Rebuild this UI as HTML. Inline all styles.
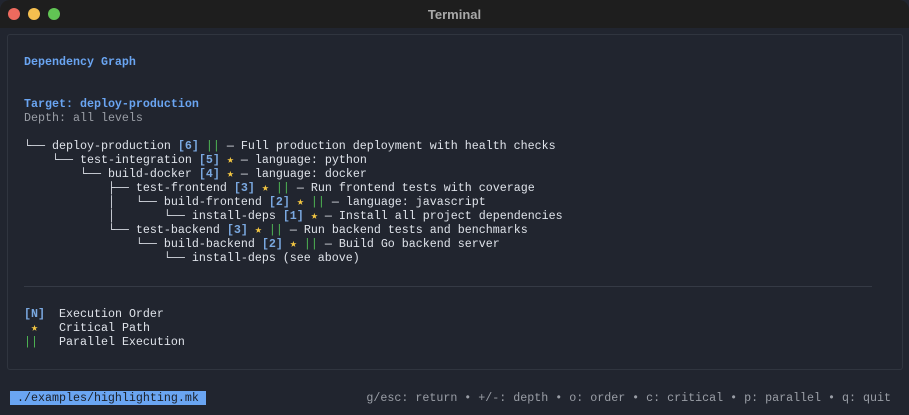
<!DOCTYPE html>
<html><head><meta charset="utf-8"><style>
*{margin:0;padding:0;box-sizing:border-box}
body{width:909px;height:415px;background:#21252f;overflow:hidden;font-family:"Liberation Mono","DejaVu Sans Mono",monospace;font-size:11.67px;color:#dfe3ea;position:relative}
.tb{position:absolute;left:0;top:0;width:909px;height:28px;background:#1e1e1e;border-radius:10px 10px 0 0}
.tb .t{position:absolute;width:100%;top:7px;text-align:center;font-family:"Liberation Sans",sans-serif;font-size:13px;font-weight:bold;color:#a9a9a9}
.d{position:absolute;top:8px;width:12px;height:12px;border-radius:50%}
.box{position:absolute;left:7px;top:34px;width:896px;height:336px;border:1px solid #30353f;border-radius:3px}
.txt{position:absolute;left:24px;top:55px;white-space:pre;line-height:14px}
.b{color:#6aa5f2;font-weight:bold}
.n{color:#7aa8e0;font-weight:bold}
.g{color:#9a9ea6}
.s{color:#f5c842}
.p{color:#4fb855}
.sep{position:absolute;left:24px;top:286px;width:848px;height:1px;background:#353a45}
.f1{position:absolute;left:10px;top:391px;height:14px;width:196px;background:#6aa5f2;color:#1b1f27;line-height:14px;white-space:pre;padding-left:7px}
.f2{position:absolute;right:18px;top:391px;line-height:14px;color:#9a9ea6;white-space:pre}
</style></head><body>
<div class="tb"><div class="d" style="left:8px;background:#ed6a5e"></div><div class="d" style="left:28px;background:#f5bf4f"></div><div class="d" style="left:48px;background:#61c554"></div><div class="t">Terminal</div></div>
<div class="box"></div>
<div class="txt"><span class="b">Dependency Graph</span>


<span class="b">Target: deploy-production</span>
<span class="g">Depth: all levels</span>

└── deploy-production <span class="n">[6]</span> <span class="p">||</span> — Full production deployment with health checks
    └── test-integration <span class="n">[5]</span> <span class="s">★</span> — language: python
        └── build-docker <span class="n">[4]</span> <span class="s">★</span> — language: docker
            ├── test-frontend <span class="n">[3]</span> <span class="s">★</span> <span class="p">||</span> — Run frontend tests with coverage
            │   └── build-frontend <span class="n">[2]</span> <span class="s">★</span> <span class="p">||</span> — language: javascript
            │       └── install-deps <span class="n">[1]</span> <span class="s">★</span> — Install all project dependencies
            └── test-backend <span class="n">[3]</span> <span class="s">★</span> <span class="p">||</span> — Run backend tests and benchmarks
                └── build-backend <span class="n">[2]</span> <span class="s">★</span> <span class="p">||</span> — Build Go backend server
                    └── install-deps (see above)



<span class="n">[N]</span>  Execution Order
 <span class="s">★</span>   Critical Path
<span class="p">||</span>   Parallel Execution</div>
<div class="sep"></div>
<div class="f1">./examples/highlighting.mk</div>
<div class="f2">g/esc: return • +/-: depth • o: order • c: critical • p: parallel • q: quit</div>
</body></html>
